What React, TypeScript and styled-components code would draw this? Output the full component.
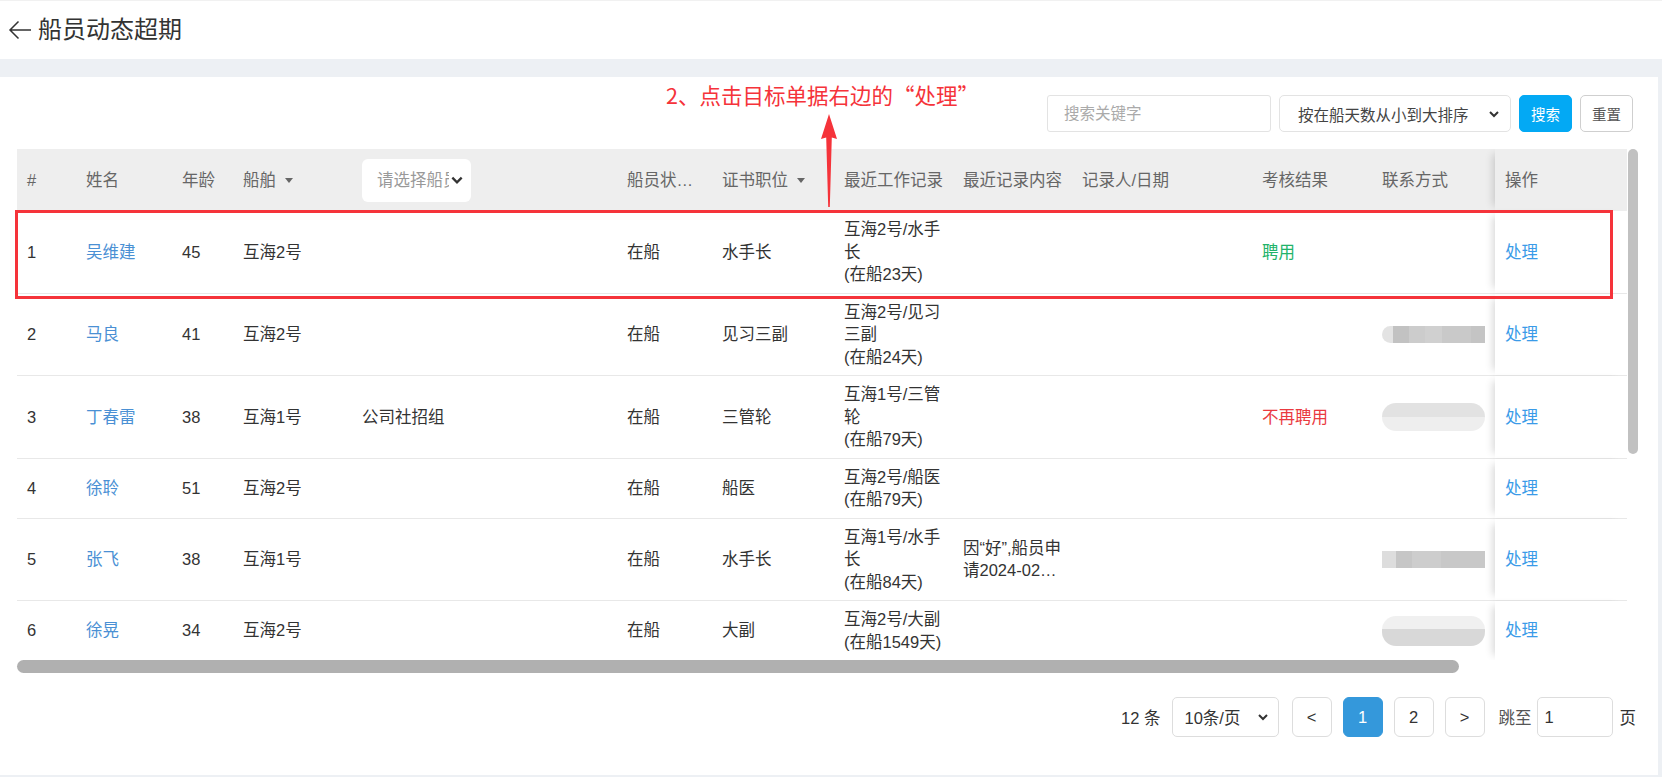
import React from "react";
import styled, { createGlobalStyle } from "styled-components";

type TBlur = "dark" | "flat" | "soft" | "fade";

type TCrew = {
  no: number;
  name: string;
  age: number;
  ship: string;
  group?: string;
  status: string;
  post: string;
  work: string;
  days: string;
  note?: string;
  result?: { text: string; ok: boolean };
  contact?: TBlur;
};

const crews: TCrew[] = [
  { no: 1, name: "吴维建", age: 45, ship: "互海2号", status: "在船", post: "水手长", work: "互海2号/水手长", days: "(在船23天)", result: { text: "聘用", ok: true } },
  { no: 2, name: "马良", age: 41, ship: "互海2号", status: "在船", post: "见习三副", work: "互海2号/见习三副", days: "(在船24天)", contact: "dark" },
  { no: 3, name: "丁春雷", age: 38, ship: "互海1号", group: "公司社招组", status: "在船", post: "三管轮", work: "互海1号/三管轮", days: "(在船79天)", result: { text: "不再聘用", ok: false }, contact: "soft" },
  { no: 4, name: "徐聆", age: 51, ship: "互海2号", status: "在船", post: "船医", work: "互海2号/船医", days: "(在船79天)" },
  { no: 5, name: "张飞", age: 38, ship: "互海1号", status: "在船", post: "水手长", work: "互海1号/水手长", days: "(在船84天)", note: "因“好”,船员申请2024-02月休假离船", contact: "flat" },
  { no: 6, name: "徐晃", age: 34, ship: "互海2号", status: "在船", post: "大副", work: "互海2号/大副", days: "(在船1549天)", contact: "fade" },
];

const COLS = "59px 96px 61px 119px 265px 95px 122px 119px 119px 180px 120px 123px 132px";

const blurLook: Record<TBlur, string> = {
  dark: `
    height: 17px;
    border-radius: 9px 0 0 9px;
    background: linear-gradient(90deg, #e3e3e3 0 11%, #c2c2c2 11% 26%, #cccccc 26% 42%, #d0d0d0 42% 58%, #c9c9c9 58% 86%, #c4c4c4 86% 100%);
  `,
  flat: `
    height: 17px;
    background: linear-gradient(90deg, #dddddd 0 14%, #c6c6c6 14% 29%, #cdcdcd 29% 57%, #c8c8c8 57% 100%);
  `,
  soft: `
    height: 28px;
    border-radius: 14px;
    background: linear-gradient(180deg, #e2e2e2 0 50%, #eeeeee 50% 100%);
  `,
  fade: `
    height: 30px;
    border-radius: 14px;
    background: linear-gradient(180deg, #f0f0f0 0 45%, #d8d8d8 45% 100%);
  `,
};

function Chevron({ size = 12 }: { size?: number }) {
  return (
    <svg width={size} height={size} viewBox="0 0 12 12">
      <polyline points="2,4 6,8 10,4" fill="none" stroke="#333" strokeWidth="2" />
    </svg>
  );
}

function App() {
  return (
    <Page>
      <GlobalStyle />
      <TitleBar>
        <svg width="26" height="26" viewBox="0 0 26 26">
          <path d="M24 13H3M11.5 4.5L3 13l8.5 8.5" fill="none" stroke="#333" strokeWidth="1.5" />
        </svg>
        <Title>船员动态超期</Title>
      </TitleBar>

      <Panel>
        <Annotation>
          2、点击目标单据右边的<Quote $side="open">“</Quote>处理<Quote $side="close">”</Quote>
        </Annotation>
        <Pointer width="20" height="94" viewBox="0 0 20 94">
          <polygon points="10,0 18,25 12.8,23.5 10.8,93 9.2,93 7.2,23.5 2,25" fill="#f5333a" />
        </Pointer>

        <Toolbar>
          <SearchInput placeholder="搜索关键字" />
          <SortSelect>
            <span>按在船天数从小到大排序</span>
            <Chevron />
          </SortSelect>
          <ActionButton $primary>搜索</ActionButton>
          <ActionButton>重置</ActionButton>
        </Toolbar>

        <TableFrame>
          <Viewport>
            <HeadRow>
              <HeadCell>#</HeadCell>
              <HeadCell>姓名</HeadCell>
              <HeadCell>年龄</HeadCell>
              <HeadCell>
                船舶<Caret />
              </HeadCell>
              <HeadCell>
                <HeadSelect>
                  <span>请选择船员</span>
                  <Chevron size={14} />
                </HeadSelect>
              </HeadCell>
              <HeadCell>船员状…</HeadCell>
              <HeadCell>
                证书职位<Caret />
              </HeadCell>
              <HeadCell>最近工作记录</HeadCell>
              <HeadCell>最近记录内容</HeadCell>
              <HeadCell>记录人/日期</HeadCell>
              <HeadCell>考核结果</HeadCell>
              <HeadCell>联系方式</HeadCell>
              <FixedCell $head>操作</FixedCell>
            </HeadRow>

            {crews.map((c) => (
              <Row key={c.no}>
                <Cell>{c.no}</Cell>
                <Cell>
                  <Name>{c.name}</Name>
                </Cell>
                <Cell>{c.age}</Cell>
                <Cell>{c.ship}</Cell>
                <Cell>{c.group}</Cell>
                <Cell>{c.status}</Cell>
                <Cell>{c.post}</Cell>
                <Cell>
                  <div>{c.work}</div>
                  <div>{c.days}</div>
                </Cell>
                <Cell>{c.note && <Clamp>{c.note}</Clamp>}</Cell>
                <Cell />
                <Cell>{c.result && <Result $ok={c.result.ok}>{c.result.text}</Result>}</Cell>
                <Cell>{c.contact && <Blur $tone={c.contact} />}</Cell>
                <FixedCell>
                  <Link>处理</Link>
                </FixedCell>
              </Row>
            ))}
          </Viewport>
          <VTrack>
            <VThumb />
          </VTrack>
          <HTrack>
            <HThumb />
          </HTrack>
          <Highlight />
        </TableFrame>

        <Pager>
          <span>12 条</span>
          <PageSize>
            <span>10条/页</span>
            <Chevron />
          </PageSize>
          <PageButton>&lt;</PageButton>
          <PageButton $active>1</PageButton>
          <PageButton>2</PageButton>
          <PageButton>&gt;</PageButton>
          <JumpLabel>跳至</JumpLabel>
          <JumpInput defaultValue="1" />
          <span>页</span>
        </Pager>
      </Panel>
    </Page>
  );
}

export default App;

const GlobalStyle = createGlobalStyle`
  html, body {
    margin: 0;
    padding: 0;
  }
  body {
    background: #edf0f4;
    font-family: "Liberation Sans", "Noto Sans CJK SC", sans-serif;
    color: #333;
  }
  * {
    box-sizing: border-box;
  }
`;

const Page = styled.div`
  width: 1662px;
  height: 777px;
  display: flex;
  flex-direction: column;
  overflow: hidden;
`;

const TitleBar = styled.div`
  height: 59px;
  background: #fff;
  border-top: 1px solid #f1f1f1;
  display: flex;
  align-items: center;
  gap: 5px;
  padding-left: 7px;
`;

const Title = styled.div`
  font-size: 24px;
  color: #333;
  line-height: 1;
`;

const Panel = styled.div`
  position: relative;
  margin: 18px 4px 0 0;
  height: 698px;
  background: #fff;
  padding: 18px 20px 0 17px;
  display: flex;
  flex-direction: column;
`;

const Annotation = styled.div`
  position: absolute;
  z-index: 3;
  left: 666px;
  top: 4px;
  font-family: "Noto Sans CJK SC", sans-serif;
  font-size: 21.5px;
  line-height: 28px;
  color: #f5333a;
  white-space: nowrap;
  pointer-events: none;
`;

const Quote = styled.span<{ $side: "open" | "close" }>`
  display: inline-block;
  width: 1em;
  text-align: ${(p) => (p.$side === "open" ? "right" : "left")};
`;

const Pointer = styled.svg`
  position: absolute;
  z-index: 3;
  left: 819px;
  top: 37px;
  pointer-events: none;
`;

const Toolbar = styled.div`
  display: flex;
  justify-content: flex-end;
  gap: 8px;
  height: 37px;
  margin-right: 5px;
`;

const SearchInput = styled.input`
  width: 224px;
  border: 1px solid #e3e3e3;
  border-radius: 3px;
  padding: 0 16px;
  font-family: inherit;
  font-size: 15.5px;
  outline: none;
  &::placeholder {
    color: #aaa;
  }
`;

const SortSelect = styled.div`
  width: 232px;
  display: flex;
  align-items: center;
  justify-content: space-between;
  border: 1px solid #e3e3e3;
  border-radius: 5px;
  padding: 0 10px 0 18px;
  font-size: 15.5px;
  color: #444;
`;

const ActionButton = styled.div<{ $primary?: boolean }>`
  width: 53px;
  display: flex;
  align-items: center;
  justify-content: center;
  border-radius: 5px;
  font-size: 14.5px;
  background: ${(p) => (p.$primary ? "#03a9f4" : "#fff")};
  color: ${(p) => (p.$primary ? "#fff" : "#555")};
  border: 1px solid ${(p) => (p.$primary ? "#03a9f4" : "#cfcfcf")};
`;

const TableFrame = styled.div`
  position: relative;
  margin-top: 17px;
  display: grid;
  grid-template-columns: 1610px 11px;
  grid-template-rows: 511px 13px;
`;

const Viewport = styled.div`
  overflow: hidden;
`;

const VTrack = styled.div`
  display: flex;
  justify-content: flex-end;
`;

const VThumb = styled.div`
  width: 10px;
  height: 305px;
  border-radius: 5px;
  background: #c1c1c1;
`;

const HTrack = styled.div`
  grid-column: 1;
`;

const HThumb = styled.div`
  width: 1442px;
  height: 13px;
  border-radius: 7px;
  background: #b0b0b0;
`;

const Highlight = styled.div`
  position: absolute;
  left: -2px;
  top: 61px;
  width: 1598px;
  height: 89px;
  border: 3px solid #f5333a;
  pointer-events: none;
`;

const Row = styled.div`
  display: grid;
  grid-template-columns: ${COLS};
  border-bottom: 1px solid #e8e8e8;
  background: #fff;
`;

const HeadRow = styled(Row)`
  height: 62px;
  background: #eeeeee;
  border-bottom: none;
  color: #666;
`;

const Cell = styled.div`
  display: flex;
  flex-direction: column;
  justify-content: center;
  min-width: 0;
  padding: 7px 8px 7px 10px;
  font-size: 16.5px;
  line-height: 22.5px;
`;

const HeadCell = styled(Cell)`
  flex-direction: row;
  align-items: center;
  justify-content: flex-start;
  white-space: nowrap;
`;

const FixedCell = styled(Cell)<{ $head?: boolean }>`
  background: ${(p) => (p.$head ? "#eeeeee" : "#fff")};
  box-shadow: -7px 0 8px -5px rgba(0, 0, 0, 0.16);
`;

const Caret = styled.span`
  width: 0;
  height: 0;
  margin-left: 9px;
  border-left: 4.5px solid transparent;
  border-right: 4.5px solid transparent;
  border-top: 5px solid #666;
`;

const HeadSelect = styled.div`
  width: 109px;
  height: 43px;
  display: flex;
  align-items: center;
  gap: 1px;
  background: #fff;
  border-radius: 6px;
  padding: 0 7px 0 15px;
  color: #999;
  span {
    flex: 1;
    overflow: hidden;
    white-space: nowrap;
  }
`;

const Name = styled.span`
  color: #4a90d4;
`;

const Link = styled.span`
  color: #3a9be8;
`;

const Result = styled.span<{ $ok: boolean }>`
  color: ${(p) => (p.$ok ? "#22b36a" : "#ea3a40")};
`;

const Clamp = styled.div`
  display: -webkit-box;
  -webkit-line-clamp: 2;
  -webkit-box-orient: vertical;
  overflow: hidden;
  word-break: break-all;
`;

const Blur = styled.div<{ $tone: TBlur }>`
  width: 103px;
  filter: blur(0.6px);
  ${(p) => blurLook[p.$tone]}
`;

const Pager = styled.div`
  display: flex;
  justify-content: flex-end;
  align-items: center;
  margin: 24px 2px 0 0;
  font-size: 16.5px;
  color: #333;
`;

const PageSize = styled.div`
  width: 107px;
  height: 40px;
  margin: 0 13px 0 11px;
  display: flex;
  align-items: center;
  justify-content: space-between;
  border: 1px solid #ddd;
  border-radius: 5px;
  padding: 0 9px 0 12px;
`;

const PageButton = styled.div<{ $active?: boolean }>`
  width: 40px;
  height: 40px;
  margin-right: 11px;
  display: flex;
  align-items: center;
  justify-content: center;
  border-radius: 6px;
  border: 1px solid ${(p) => (p.$active ? "#3498db" : "#ddd")};
  background: ${(p) => (p.$active ? "#3498db" : "#fff")};
  color: ${(p) => (p.$active ? "#fff" : "#333")};
`;

const JumpLabel = styled.span`
  margin-left: 3px;
  color: #555;
`;

const JumpInput = styled.input`
  width: 76px;
  height: 40px;
  margin: 0 7px 0 5px;
  border: 1px solid #ddd;
  border-radius: 5px;
  padding: 0 7px;
  font-family: inherit;
  font-size: 16.5px;
  color: #333;
  outline: none;
`;
